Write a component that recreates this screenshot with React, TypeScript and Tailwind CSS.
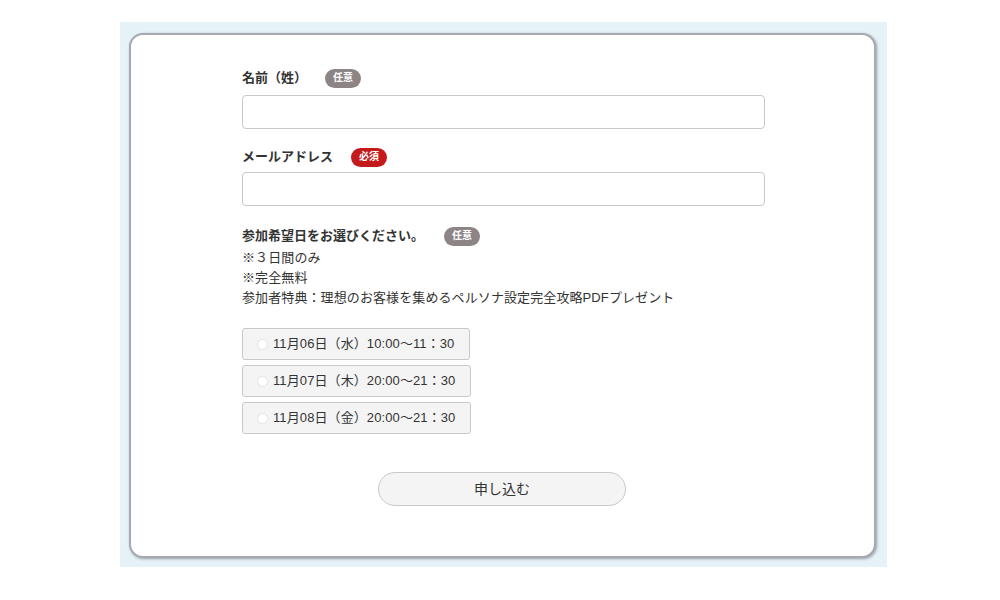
import React from "react";

const font = { fontFamily: '"Liberation Sans", "Noto Sans CJK JP", sans-serif' };

function Badge({ kind }: { kind: "opt" | "req" }) {
  return (
    <span
      className={
        "inline-flex items-center justify-center w-[36px] h-[19px] rounded-full text-[10px] font-bold text-white leading-none " +
        (kind === "req" ? "bg-[#c41a1b]" : "bg-[#8d8486]")
      }
    >
      {kind === "req" ? "必須" : "任意"}
    </span>
  );
}

function Radio({ label, w }: { label: string; w: string }) {
  return (
    <label
      className={
        "flex items-center h-[32px] border border-[#c9c9c9] rounded-[3px] bg-[#f4f4f4] pl-[14px] text-[13px] tracking-[0.1px] text-[#333] " +
        w
      }
    >
      <span className="w-[11px] h-[11px] rounded-full bg-white border border-[#e4e4e4] mr-[5px]" />
      <span>{label}</span>
    </label>
  );
}

export default function App() {
  return (
    <div className="w-[1000px] h-[600px] bg-white pt-[22px]" style={font}>
      <div className="ml-[120px] w-[767px] h-[545px] bg-[#e5f3f9] pt-[11px] pl-[9px]">
        <div className="w-[747px] h-[525px] bg-white rounded-[14px] border-2 border-[#a9a9b1] shadow-[1px_1px_3px_rgba(0,0,0,0.35)] pt-[33px]">
          <div className="w-[523px] ml-[111px]">
            <div className="flex items-center h-[20px]">
              <span className="w-[83px] text-[13px] font-bold text-[#333]">名前（姓）</span>
              <Badge kind="opt" />
            </div>
            <div className="mt-[7px] h-[34px] border border-[#c8c8c8] rounded-[4px]" />

            <div className="flex items-center h-[20px] mt-[18px]">
              <span className="w-[109px] text-[13px] font-bold text-[#333]">メールアドレス</span>
              <Badge kind="req" />
            </div>
            <div className="mt-[5px] h-[34px] border border-[#c8c8c8] rounded-[4px]" />

            <div className="flex items-center h-[20px] mt-[20px]">
              <span className="w-[202px] text-[13px] font-bold text-[#333]">参加希望日をお選びください。</span>
              <Badge kind="opt" />
            </div>
            <div className="mt-[2px] text-[13px] leading-[20px] tracking-[0.1px] text-[#333]">
              <div>※３日間のみ</div>
              <div>※完全無料</div>
              <div>参加者特典：理想のお客様を集めるペルソナ設定完全攻略PDFプレゼント</div>
            </div>

            <div className="mt-[20px] flex flex-col gap-[5px]">
              <Radio label="11月06日（水）10:00〜11：30" w="w-[228px]" />
              <Radio label="11月07日（木）20:00〜21：30" w="w-[229px]" />
              <Radio label="11月08日（金）20:00〜21：30" w="w-[229px]" />
            </div>

            <div className="mt-[38px] flex">
              <button className="ml-[136px] w-[248px] h-[34px] rounded-full border border-[#c8c8c8] bg-[#f4f4f4] text-[14px] text-[#333]">
                申し込む
              </button>
            </div>
          </div>
        </div>
      </div>
    </div>
  );
}
